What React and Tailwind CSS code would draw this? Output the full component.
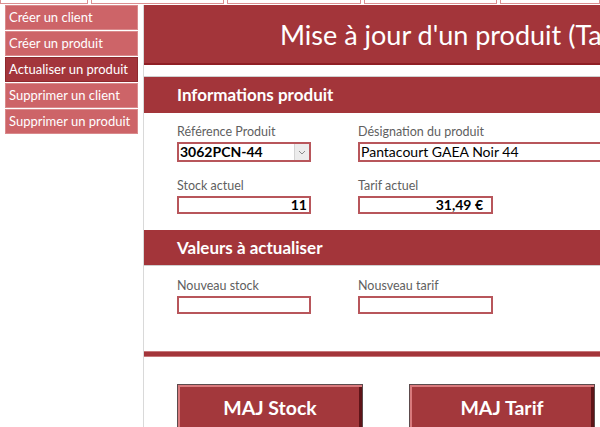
import React from "react";

const font = { fontFamily: "Lato, 'Open Sans', sans-serif" };

function Field({ label, width, value, bold, right, combo, pad = "", h = "h-[20px]" }) {
  return (
    <div className="shrink-0" style={{ width }}>
      <div className="text-[12.5px] leading-[16px] whitespace-nowrap text-[#5f5f5f]">{label}</div>
      <div
        className={`mt-[2px] flex ${h} items-center border-2 border-[#b8565b] bg-white text-[14px] leading-none whitespace-nowrap text-black ${bold ? "font-bold" : ""} ${right ? "justify-end pr-[2px]" : "pl-[1px]"} ${pad}`}
      >
        <span className={combo ? "flex-1" : ""}>{value}</span>
        {combo && (
          <span className="flex h-full w-[15px] items-center justify-center border-l border-[#d4d4d4] bg-[#ececec]">
            <svg width="8" height="5" viewBox="0 0 8 5">
              <path d="M1 1 L4 4 L7 1" fill="none" stroke="#8a8a8a" strokeWidth="1" />
            </svg>
          </span>
        )}
      </div>
    </div>
  );
}

function SideItem({ children, active }) {
  return (
    <div
      className={`mb-[1px] flex h-[25px] items-center border pl-[3px] text-[13px] whitespace-nowrap text-white ${active ? "border-[#8e2a2f] bg-[#a3353b]" : "border-[#d98a8c] bg-[#cd6468]"}`}
    >
      {children}
    </div>
  );
}

function Btn({ children }) {
  return (
    <div className="h-[52px] w-[186px] shrink-0 border border-[#5c4a4c] bg-[#a3383c] shadow-[inset_2px_2px_0_#d97a7d,inset_-3px_-2px_0_#5e1418]">
      <div className="flex h-[46px] items-center justify-center text-[19.5px] font-bold text-white">{children}</div>
    </div>
  );
}

export default function App() {
  return (
    <div className="relative h-[427px] w-[600px] overflow-hidden bg-white" style={font}>
      <div className="flex h-[4px] gap-[3px]">
        <div className="w-[88px] border border-t-0 border-[#dc8f91]" />
        <div className="w-[133px] border border-t-0 border-[#dc8f91]" />
        <div className="w-[134px] border border-t-0 border-[#dc8f91]" />
        <div className="w-[133px] border border-t-0 border-[#dc8f91]" />
        <div className="flex-1 border border-t-0 border-[#dc8f91]" />
      </div>
      <div className="mt-[1px] flex">
        <div className="w-[143px] shrink-0 pl-[5px] pr-[5px]">
          <SideItem>Créer un client</SideItem>
          <SideItem>Créer un produit</SideItem>
          <SideItem active>Actualiser un produit</SideItem>
          <SideItem>Supprimer un client</SideItem>
          <SideItem>Supprimer un produit</SideItem>
        </div>
        <div className="h-[430px] min-w-0 flex-1 overflow-hidden border-l border-[#d9d9d9]">
          <div className="flex h-[60px] items-center border-b-2 border-[#8f1f25] bg-[#a3353a] pt-[3px] pl-[136px] text-[27px] whitespace-nowrap text-white">
            Mise à jour d'un produit (Tarif)
          </div>
          <div className="mt-[11px] flex h-[37px] items-center border-t border-[#cfcfcf] bg-[#a3353a] pl-[33px] text-[17px] font-bold text-white">
            Informations produit
          </div>
          <div className="flex gap-[47px] pl-[33px] pt-[11px]">
            <Field label="Référence Produit" width={134} value="3062PCN-44" bold combo />
            <Field label="Désignation du produit" width={300} value="Pantacourt GAEA Noir 44" />
          </div>
          <div className="flex gap-[47px] pl-[33px] pt-[16px]">
            <Field label="Stock actuel" width={134} value="11" bold right h="h-[18px]" />
            <Field label="Tarif actuel" width={135} value="31,49 €" bold right pad="pr-[8px]" h="h-[18px]" />
          </div>
          <div className="mt-[16px] flex h-[36px] items-center border-b border-[#cfcfcf] bg-[#a3353a] pl-[33px] text-[17px] font-bold text-white">
            Valeurs à actualiser
          </div>
          <div className="flex gap-[47px] pl-[33px] pt-[12px]">
            <Field label="Nouveau stock" width={134} value="" h="h-[18px]" />
            <Field label="Nousveau tarif" width={135} value="" h="h-[18px]" />
          </div>
          <div className="mt-[37px] h-[6px] border-y border-[#c7777a] bg-[#a3353a]" />
          <div className="flex gap-[46px] pl-[33px] pt-[27px]">
            <Btn>MAJ Stock</Btn>
            <Btn>MAJ Tarif</Btn>
          </div>
        </div>
      </div>
    </div>
  );
}
